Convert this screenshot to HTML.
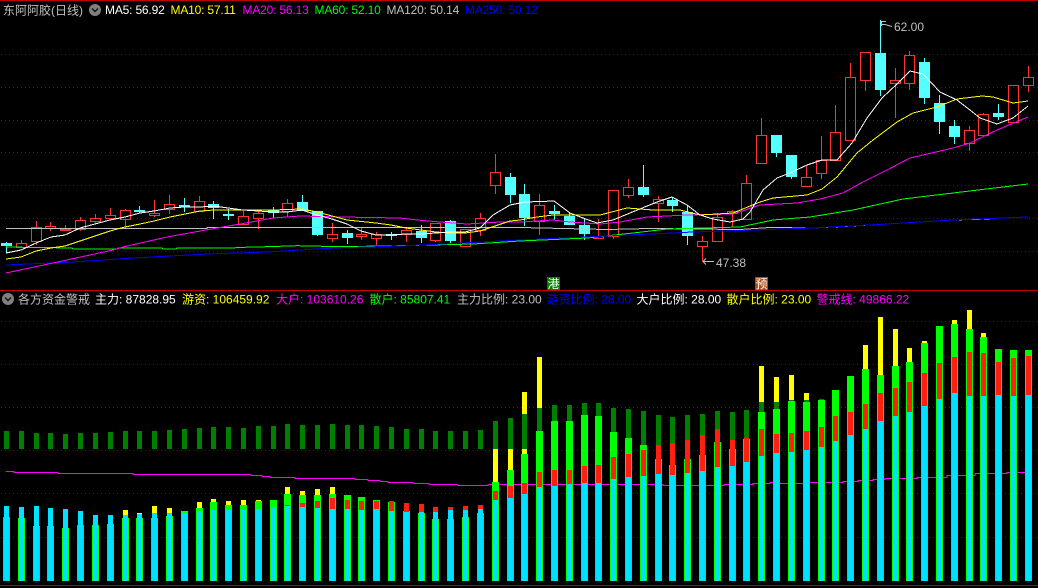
<!DOCTYPE html>
<html><head><meta charset="utf-8"><title>东阿阿胶(日线)</title>
<style>
html,body{margin:0;padding:0;background:#000;width:1038px;height:588px;overflow:hidden}
svg{display:block;position:absolute;left:0;top:0}
text{font-family:"Liberation Sans","Noto Sans CJK SC",sans-serif;font-size:12px;white-space:pre}
.ma{letter-spacing:-.18px}
</style></head><body>
<svg width="1038" height="588" viewBox="0 0 1038 588" xmlns="http://www.w3.org/2000/svg">
<rect width="1038" height="588" fill="#000"/>
<g shape-rendering="crispEdges">
<rect x="0" y="0" width="1038" height="1" fill="#c00000"/>
<rect x="0" y="290" width="1038" height="1" fill="#c00000"/>
<rect x="0" y="585" width="1038" height="1" fill="#c00000"/>
<path fill="none" stroke="#900000" stroke-dasharray="1 3" d="M1 54.5H1038M1 87.5H1038M1 120.5H1038M1 152.5H1038M1 185.5H1038M1 218.5H1038M1 251.5H1038M1 321.5H1038M1 364.5H1038M1 407.5H1038M1 450.5H1038M1 493.5H1038M1 537.5H1038"/>
</g>
<!-- red candles -->
<path fill="none" stroke="#ff3232" d="M21.5 240V243M16.5 243.5h10v4h-10z
M36.5 221V227M36.5 242V245M31.5 227.5h10v14h-10z
M50.5 222V226M50.5 228V231M45.5 226.5h10v2h-10z
M65.5 225V229M60.5 229.5h10v1h-10z
M80.5 217V220M80.5 229V231M75.5 220.5h10v9h-10z
M95.5 214V218M95.5 221V224M90.5 218.5h10v3h-10z
M110.5 208V215M110.5 218V220M105.5 215.5h10v3h-10z
M125.5 209V210M125.5 219V228M120.5 210.5h10v9h-10z
M154.5 200V213M154.5 215V217M149.5 213.5h10v2h-10z
M169.5 195V204M169.5 209V214M164.5 204.5h10v5h-10z
M199.5 196V201M194.5 201.5h10v10h-10z
M243.5 211V216M238.5 216.5h10v8h-10z
M258.5 210V213M258.5 218V229M253.5 213.5h10v5h-10z
M287.5 199V203M287.5 211V217M282.5 203.5h10v8h-10z
M332.5 223V234M332.5 238V242M327.5 234.5h10v4h-10z
M361.5 227V234M361.5 236V240M356.5 234.5h10v2h-10z
M376.5 232V234M376.5 238V245M371.5 234.5h10v4h-10z
M406.5 228V230M406.5 234V242M401.5 230.5h10v4h-10z
M435.5 240V242M430.5 223.5h10v17h-10z
M460.5 229.5h10v17h-10z
M480.5 213V218M480.5 230V236M475.5 218.5h10v12h-10z
M495.5 154V172M495.5 185V194M490.5 172.5h10v13h-10z
M539.5 194V205M539.5 221V235M534.5 205.5h10v16h-10z
M598.5 219V236M593.5 236.5h10v2h-10z
M613.5 236V239M608.5 190.5h10v46h-10z
M628.5 179V187M628.5 195V198M623.5 187.5h10v8h-10z
M658.5 196V199M658.5 203V222M653.5 199.5h10v4h-10z
M702.5 236V241M702.5 246V262M697.5 241.5h10v5h-10z
M717.5 213V217M712.5 217.5h10v24h-10z
M732.5 210V211M732.5 213V227M727.5 211.5h10v2h-10z
M746.5 175V183M741.5 183.5h10v36h-10z
M761.5 118V135M756.5 135.5h10v28h-10z
M806.5 166V177M806.5 186V187M801.5 177.5h10v9h-10z
M821.5 136V160M821.5 173V179M816.5 160.5h10v13h-10z
M835.5 105V132M830.5 132.5h10v28h-10z
M850.5 63V77M845.5 77.5h10v63h-10z
M865.5 80V91M860.5 52.5h10v28h-10z
M895.5 68V80M895.5 83V118M890.5 80.5h10v3h-10z
M909.5 51V55M909.5 83V90M904.5 55.5h10v28h-10z
M969.5 126V130M969.5 143V151M964.5 130.5h10v13h-10z
M983.5 113V114M978.5 114.5h10v21h-10z
M1008.5 85.5h10v37h-10z
M1028.5 66V77M1028.5 85V92M1023.5 77.5h10v8h-10z"/>
<!-- cyan wicks -->
<path fill="none" stroke="#54ffff" d="M6.5 242V253M139.5 206V213M184.5 198V212M213.5 201V219M228.5 209V220M273.5 207V218M302.5 195V211M317.5 211V236M347.5 230V244M391.5 232V240M421.5 225V243M450.5 220V243M510.5 173V203M524.5 184V226M554.5 205V220M569.5 212V225M584.5 218V240M643.5 165V197M672.5 197V212M687.5 205V245M776.5 135V157M791.5 155V179M880.5 20V96M924.5 58V104M939.5 95V134M954.5 120V144M998.5 104V120"/>
<!-- cyan bodies -->
<path fill="none" stroke="#54ffff" stroke-width="11" d="M6.5 243V246M139.5 210V212M184.5 205V207M213.5 204V208M228.5 214V216M273.5 210V213M302.5 202V211M317.5 211V235M347.5 233V238M391.5 234V236M421.5 231V238M450.5 221V241M510.5 177V195M524.5 194V218M554.5 211V214M569.5 216V225M584.5 225V234M643.5 187V195M672.5 200V206M687.5 212V236M776.5 135V153M791.5 155V177M880.5 53V90M924.5 62V98M939.5 103V122M954.5 126V137M998.5 113V117"/>
<!-- MA lines -->
<g fill="none" stroke-width="1" shape-rendering="crispEdges">
<polyline stroke="#c0c0c0" points="6,228.5 207,228.5 207,227.5 520,227.5 563,228.5 607,229.5 650,228.5 740,229.5 770,227.5 813,228 843,226.5 887,224 953,220 990,219"/>
<polyline stroke="#00ff00" points="6,247 72,248 73,249 117,249 118,248 162,248 163,249 176,249 177,248 235,248 236,247.5 267,246.7 297,245.7 340,246.7 400,245.7 473,244 520,241 587,238 633,233 667,229 740,227 773,220 810,217 853,210 903,199 953,193 1028,184"/>
<polyline stroke="#0000ff" points="6,265 73,262 133,258 207,254 267,252 333,248 400,246 443,244 500,241 520,240 607,236 693,232 813,228 887,224 953,220 1028,217"/>
<polyline stroke="#ff00ff" points="6,273 53,263 113,250 123,247 167,237 217,228 240,224 273,218 300,216 340,217 400,218 417,220 440,222 467,224 500,222 520,222 553,220 570,222 600,224 620,222 647,217 687,215 733,214 760,205 797,203 820,199 843,193 863,182 887,170 910,158 953,148 970,143 997,130 1028,117"/>
<polyline stroke="#ffff00" points="6,259 21,257 36,251 51,248 65,246 80,241 95,236 110,231 125,227 140,224 154,221 170,217 185,214 200,211 214,210 243,210 273,210 302,209 317,212 332,216 347,220 376,223 391,225 406,228 421,230 436,232 450,233 465,233 480,231 495,226 510,221 520,220 537,217 553,215 600,215 627,208 653,210 680,210 700,215 733,213 760,202 773,198 807,195 822,189 837,177 857,153 873,140 897,122 913,113 937,107 957,99 982,96 993,97 1013,103 1028,101"/>
<polyline stroke="#ffffff" points="6,253 21,250 36,243 51,237 65,235 80,228 95,224 110,220 125,217 140,213 154,211 170,208 185,207 200,207 214,206 228,208 243,210 258,211 273,212 287,212 302,210 317,215 332,219 347,224 361,231 376,235 391,235 406,234 421,234 436,233 450,232 465,232 480,228 493,215 510,205 525,202 540,201.5 554,201 570,213 583,218 597,223 613,220 630,213 657,202 672,197 687,205 700,215 713,219 730,222 743,219 750,212 763,190 777,178 790,173 807,165 822,160 837,160 852,143 867,118 882,98 897,84 910,71 923,74 940,92 957,100 970,110 980,118 997,124 1013,118 1028,106"/>
</g>
<!-- high / low markers -->
<path fill="none" stroke="#c0c0c0" d="M881 21.5h5M881.5 21V26M882 24.5h3l7 2"/>
<path fill="none" stroke="#c0c0c0" d="M703 261.5h11M703 261.5l3-3M703 261.5l3 3"/>
<text x="894" y="31" fill="#c0c0c0">62.00</text>
<text x="716" y="267" fill="#c0c0c0">47.38</text>
<!-- badges -->
<rect x="547" y="277" width="13" height="13" fill="#008000" shape-rendering="crispEdges"/>
<rect x="755" y="277" width="13" height="13" fill="#b04a10" shape-rendering="crispEdges"/>
<text x="547.5" y="288" fill="#fff" style="font-size:12px">港</text>
<text x="755.5" y="288" fill="#fff" style="font-size:12px">预</text>
<!-- lower pane -->
<path fill="none" stroke="#ff00ff" shape-rendering="crispEdges" d="M6 471.5H14V472.5H58V473.5H133V474.5H251V475.5H262V476.5H270V477.5H295V478.5H355V479.5H368V480.5H380V481.5H388V482.5H413V483.5H429V484.5H458V485.5H488V484.5H663V485.5H724V484.5H753V483.5H770V482.5H780V483.5H805V482.5H843V481.5H858V480.5H873V479.5H885V478.5H917V477.5H947V475.5H975V473.5H1007V472.5H1025"/>
<g fill="none" shape-rendering="crispEdges">
<path stroke="#ffff00" stroke-width="5" d="M125.5 510V518M139.5 513V518M154.5 506V518M169.5 508V516M199.5 502V508M213.5 499V502M228.5 501V505M243.5 500V505M258.5 500V501M287.5 487V494M302.5 491V495M317.5 489V495M332.5 487V494M495.5 449V482M510.5 449V470M524.5 392V454M539.5 357V431M761.5 366V412M776.5 377V409M791.5 375V401M806.5 393V402M865.5 345V369M880.5 317V375M895.5 329V366M909.5 348V362M924.5 341V343M954.5 320V324M969.5 310V329M983.5 333V337"/>
<path stroke="#008000" stroke-width="5" d="M6.5 431V449M21.5 431V449M36.5 433V449M50.5 433V449M65.5 434V449M80.5 433V449M95.5 433V449M110.5 432V449M125.5 431V449M139.5 431V449M154.5 431V449M169.5 430V449M184.5 429V449M199.5 428V449M213.5 427V449M228.5 427V449M243.5 428V449M258.5 426V449M273.5 426V449M287.5 424V449M302.5 425V449M317.5 425V449M332.5 424V449M347.5 425V449M361.5 425V449M376.5 426V449M391.5 427V449M406.5 429V449M421.5 429V449M435.5 431V449M450.5 431V449M465.5 431V449M480.5 430V449M495.5 421V449M510.5 418V449M524.5 414V449M539.5 408V449M554.5 405V449M569.5 405V449M584.5 403V449M598.5 403V449M613.5 408V449M628.5 409V449M643.5 411V449M658.5 415V449M672.5 417V449M687.5 415V449M702.5 414V449M717.5 411V449M732.5 412V449M746.5 410V449M761.5 402V449M776.5 402V449M791.5 400V449M806.5 400V449M821.5 399V449"/>
<path stroke="#00ff00" stroke-width="7" d="M6.5 517V581M21.5 518V581M36.5 526V581M50.5 526V581M65.5 528V581M80.5 525V581M95.5 525V581M110.5 524V581M125.5 518V581M139.5 518V581M154.5 518V581M169.5 516V581M184.5 511V581M199.5 508V581M213.5 502V581M228.5 505V581M243.5 505V581M258.5 501V581M273.5 500V581M287.5 494V581M302.5 495V581M317.5 495V581M332.5 494V581M347.5 495V581M361.5 497V581M376.5 500V581M391.5 502V581M406.5 511V581M421.5 513V581M435.5 519V581M450.5 519V581M465.5 517V581M480.5 513V581M495.5 482V581M510.5 470V581M524.5 454V581M539.5 431V581M554.5 421V581M569.5 421V581M584.5 415V581M598.5 416V581M613.5 432V581M628.5 438V581M643.5 445V581M658.5 459V581M672.5 465V581M687.5 459V581M702.5 455V581M717.5 442V581M732.5 449V581M746.5 439V581M761.5 412V581M776.5 409V581M791.5 401V581M806.5 402V581M821.5 400V581M835.5 390V581M850.5 376V581M865.5 369V581M880.5 375V581M895.5 366V581M909.5 362V581M924.5 343V581M939.5 326V581M954.5 324V581M969.5 329V581M983.5 337V581M998.5 349V581M1013.5 350V581M1028.5 350V581"/>
<path stroke="#ff2010" stroke-width="5" d="M287.5 505V507M302.5 503V507M317.5 501V508M332.5 498V509M347.5 500V509M361.5 501V510M376.5 501V509M391.5 501V511M406.5 503V512M421.5 504V512M435.5 507V512M450.5 507V510M465.5 506V510M480.5 505V509M495.5 491V500M510.5 486V498M524.5 483V494M539.5 472V487M554.5 470V486M569.5 470V484M584.5 466V483M598.5 465V483M613.5 457V479M628.5 454V477M643.5 450V476M658.5 445V474M672.5 443V475M687.5 440V473M702.5 435V471M717.5 429V467M732.5 440V466M746.5 438V462M761.5 429V456M776.5 434V453M791.5 433V452M806.5 431V450M821.5 427V447M835.5 416V441M850.5 412V435M865.5 404V429M880.5 393V421M895.5 388V416M909.5 382V412M924.5 373V406M939.5 363V399M954.5 357V393M969.5 352V396M983.5 353V396M998.5 362V395M1013.5 358V396M1028.5 356V395"/>
<path stroke="#00e0ff" stroke-width="5" d="M6.5 506V581M21.5 507V581M36.5 506V581M50.5 508V581M65.5 509V581M80.5 511V581M95.5 515V581M110.5 515V581M125.5 515V581M139.5 514V581M154.5 513V581M169.5 513V581M184.5 513V581M199.5 511V581M213.5 510V581M228.5 510V581M243.5 510V581M258.5 509V581M273.5 508V581M287.5 506V581M302.5 507V581M317.5 508V581M332.5 509V581M347.5 509V581M361.5 510V581M376.5 509V581M391.5 511V581M406.5 512V581M421.5 512V581M435.5 512V581M450.5 510V581M465.5 510V581M480.5 509V581M495.5 500V581M510.5 498V581M524.5 494V581M539.5 487V581M554.5 486V581M569.5 484V581M584.5 483V581M598.5 483V581M613.5 479V581M628.5 477V581M643.5 476V581M658.5 474V581M672.5 475V581M687.5 473V581M702.5 471V581M717.5 467V581M732.5 466V581M746.5 462V581M761.5 456V581M776.5 453V581M791.5 452V581M806.5 450V581M821.5 447V581M835.5 441V581M850.5 435V581M865.5 429V581M880.5 421V581M895.5 416V581M909.5 412V581M924.5 406V581M939.5 399V581M954.5 393V581M969.5 396V581M983.5 396V581M998.5 395V581M1013.5 396V581M1028.5 395V581"/>
</g>
<!-- header row top -->
<text x="3" y="14.5" fill="#c0c0c0">东阿阿胶(日线)</text>
<circle cx="95" cy="10" r="6" fill="#808080"/>
<path d="M92 8.5l3 3 3-3" fill="none" stroke="#111" stroke-width="1.4"/>
<text class="ma" x="105" y="14" fill="#fff">MA5: 56.92</text>
<text class="ma" x="170.5" y="14" fill="#ffff00">MA10: 57.11</text>
<text class="ma" x="242.5" y="14" fill="#ff00ff">MA20: 56.13</text>
<text class="ma" x="314.5" y="14" fill="#00ff00">MA60: 52.10</text>
<text class="ma" x="386.5" y="14" fill="#c0c0c0">MA120: 50.14</text>
<text class="ma" x="465" y="14" fill="#0000ff">MA250: 50.12</text>
<!-- header row lower -->
<circle cx="8" cy="299" r="6" fill="#808080"/>
<path d="M5 297.5l3 3 3-3" fill="none" stroke="#111" stroke-width="1.4"/>
<text x="18" y="303.5" fill="#c0c0c0">各方资金警戒</text>
<text x="95" y="303.5" fill="#fff">主力: 87828.95</text>
<text x="182" y="303.5" fill="#ffff00">游资: 106459.92</text>
<text x="276" y="303.5" fill="#ff00ff">大户: 103610.26</text>
<text x="369.5" y="303.5" fill="#00ff00">散户: 85807.41</text>
<text x="457" y="303.5" fill="#c0c0c0">主力比例: 23.00</text>
<text x="546.5" y="303.5" fill="#0000ff">游资比例: 28.00</text>
<text x="636.5" y="303.5" fill="#fff">大户比例: 28.00</text>
<text x="726.5" y="303.5" fill="#ffff00">散户比例: 23.00</text>
<text x="816.5" y="303.5" fill="#ff00ff">警戒线: 49866.22</text>
</svg>
</body></html>
